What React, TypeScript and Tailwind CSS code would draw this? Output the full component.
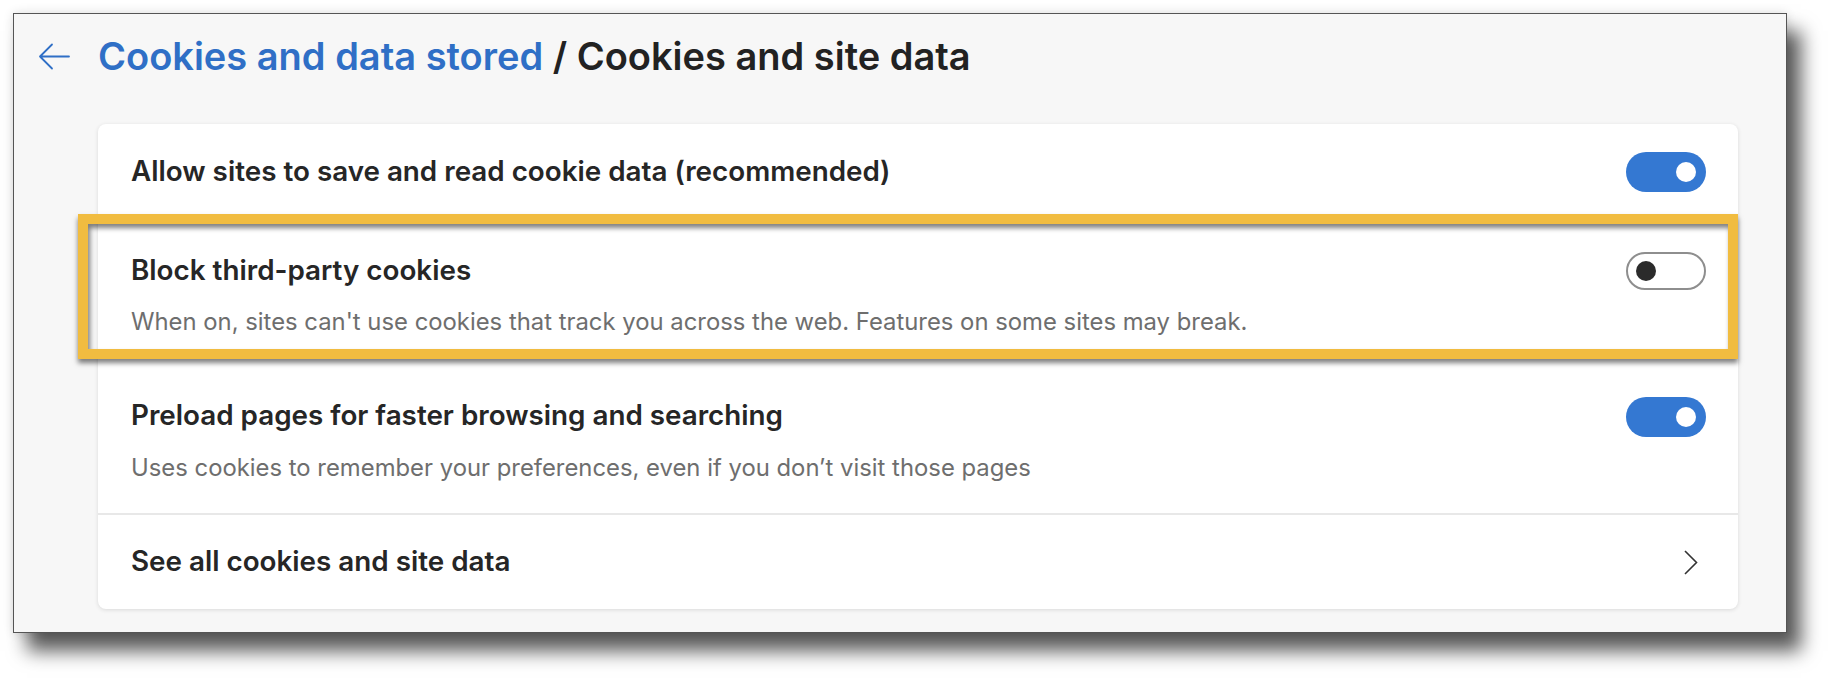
import React from 'react';

const font = { fontFamily: 'Inter, "Noto Sans", sans-serif' };

const Toggle: React.FC<{ on: boolean }> = ({ on }) =>
  on ? (
    <div className="flex h-[40px] w-[80px] shrink-0 items-center justify-end rounded-full bg-[#3478d2] pr-[10px]">
      <div className="h-[20px] w-[20px] rounded-full bg-white" />
    </div>
  ) : (
    <div className="flex h-[38px] w-[80px] shrink-0 items-center rounded-full border-2 border-[#8e8e8e] bg-white pl-[8px]">
      <div className="h-[20px] w-[20px] rounded-full bg-[#2b2b2b]" />
    </div>
  );

const App: React.FC = () => {
  return (
    <div className="h-[678px] w-[1832px] bg-white pl-[13px] pt-[13px]" style={font}>
      <div className="h-[620px] w-[1774px] border border-[#555] bg-[#f7f7f7] shadow-[14px_18px_18px_rgba(0,0,0,0.65),0_0_10px_rgba(0,0,0,0.12)]">
        {/* header */}
        <div className="h-[110px] pl-[24px] pt-[18px]">
          <div className="flex h-[48px] items-center">
            <svg width="33" height="27" viewBox="0 0 33 27" fill="none" stroke="#2f6fc6" strokeWidth="1.8" strokeLinecap="round" strokeLinejoin="round">
              <path d="M2 13.5 H31 M14 1.5 L2 13.5 L14 25.5" />
            </svg>
            <h1 className="ml-[27px] text-[38px] font-semibold leading-[48px] text-[#222]">
              <span className="text-[#2f6fc6]">Cookies and data stored</span> / Cookies and site data
            </h1>
          </div>
        </div>

        {/* card */}
        <div className="relative ml-[84px] w-[1640px] rounded-lg bg-white shadow-[0_1px_4px_rgba(0,0,0,0.12)]">
          <div className="flex h-[96px] items-center justify-between pl-[33px] pr-[32px]">
            <span className="text-[27.8px] font-semibold text-[#262626]">Allow sites to save and read cookie data (recommended)</span>
            <Toggle on />
          </div>

          <div className="flex items-start justify-between pb-[28px] pl-[33px] pr-[32px] pt-[32px]">
            <div>
              <div className="text-[27.8px] font-semibold leading-[36px] text-[#262626]">Block third-party cookies</div>
              <div className="mt-[19px] text-[23.85px] leading-[30px] text-[#6e6e6e]">
                When on, sites can't use cookies that track you across the web. Features on some sites may break.
              </div>
            </div>
            <Toggle on={false} />
          </div>

          <div className="flex items-start justify-between pb-[30px] pl-[33px] pr-[32px] pt-[32px]">
            <div>
              <div className="text-[27.8px] font-semibold leading-[36px] text-[#262626]">Preload pages for faster browsing and searching</div>
              <div className="mt-[20px] text-[23.85px] leading-[30px] text-[#6e6e6e]">
                Uses cookies to remember your preferences, even if you don’t visit those pages
              </div>
            </div>
            <Toggle on />
          </div>

          <div className="flex h-[96px] items-center justify-between border-t-2 border-[#e8e8e8] pl-[33px] pr-[40px]">
            <span className="text-[27.8px] font-semibold text-[#262626]">See all cookies and site data</span>
            <svg width="14" height="25" viewBox="0 0 14 25" fill="none" stroke="#333" strokeWidth="1.6">
              <path d="M1 1 L12.5 12.5 L1 24" />
            </svg>
          </div>

          {/* highlight annotation */}
          <div className="pointer-events-none absolute left-[-20px] top-[90px] h-[145px] w-[1660px] border-[10px] border-[#f1bc40] shadow-[0_4px_5px_rgba(0,0,0,0.5),inset_2px_4px_5px_rgba(0,0,0,0.5)]" />
        </div>
      </div>
    </div>
  );
};

export default App;
